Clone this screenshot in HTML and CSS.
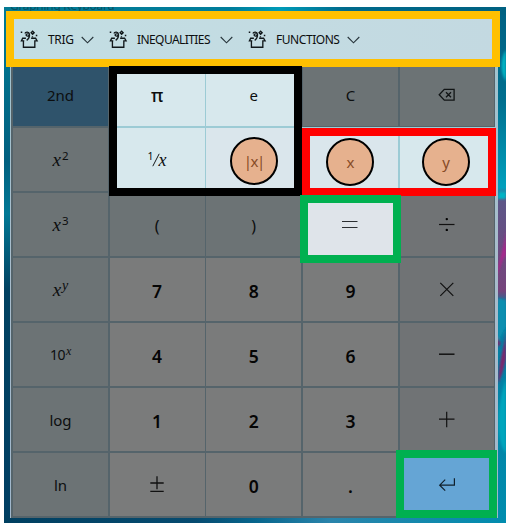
FILE: index.html
```html
<!DOCTYPE html>
<html lang="en">
<head>
<meta charset="utf-8">
<title>Graphing Keyboard</title>
<link rel="stylesheet" href="styles.css">
</head>
<body>
<svg class="defs" width="0" height="0">
  <symbol id="gift" viewBox="0 0 20 20">
    <g fill="none" stroke="#10171a" stroke-width="1.4">
      <path d="M6.2 9.2H2.8L1.5 12h3M3.6 11.5v7.2h12v-7.2M11.7 9.2h4.7l1.6 2.8h-3"/>
      <path d="M5.2 4.2C5.8 2.2 9.6 2.1 9.9 4.8c.2 2.8-3.7 2.7-3.4.7.3-1.3 1.7-1.1 2-.4M9.9 4.5c.4 3-.3 5.1-2.9 6.9"/>
      <path d="M13.3 1.8l1.6 1.6-1.6 1.6-1.6-1.6z"/>
    </g>
    <path fill="#10171a" d="M.8 2h1.6v1.6H.8zM16.6 5.5h1.6v1.6h-1.6zM12.4 7h1.4v1.4h-1.4z"/>
  </symbol>
  <symbol id="chevron" viewBox="0 0 13 8"><path d="M.7 1l5.8 5.8L12.3 1" fill="none" stroke="#27343a" stroke-width="1.1"/></symbol>
</svg>
<main class="desktop">
  <svg class="wallpaper" viewBox="0 0 502 516" preserveAspectRatio="none">
    <defs>
      <linearGradient id="left" x2="0" y2="1"><stop offset="0" stop-color="#007c96"/><stop offset=".3" stop-color="#005f7f"/><stop offset=".4" stop-color="#007895"/><stop offset=".55" stop-color="#004060"/><stop offset="1" stop-color="#003f63"/></linearGradient>
      <linearGradient id="top"><stop offset="0" stop-color="#047a94"/><stop offset=".45" stop-color="#007d9b"/><stop offset=".55" stop-color="#009bb8"/><stop offset=".68" stop-color="#006a8c"/><stop offset="1" stop-color="#006181"/></linearGradient>
      <linearGradient id="bottom"><stop offset="0" stop-color="#003f60"/><stop offset=".38" stop-color="#064b70"/><stop offset=".5" stop-color="#07658c"/><stop offset=".65" stop-color="#2a84ab"/><stop offset="1" stop-color="#008cae"/></linearGradient>
      <linearGradient id="right" x2="0" y2="1"><stop offset="0" stop-color="#006183"/><stop offset=".18" stop-color="#006f8f"/><stop offset=".35" stop-color="#00a0bd"/><stop offset=".37" stop-color="#5c5788"/><stop offset=".55" stop-color="#76447c"/><stop offset=".58" stop-color="#057ba0"/><stop offset="1" stop-color="#008dae"/></linearGradient>
      <filter id="soft"><feGaussianBlur stdDeviation="1"/></filter>
    </defs>
    <path fill="url(#left)" d="M0 0h250v516H0z"/>
    <path fill="url(#right)" d="M250 0h252v516H250z"/>
    <path fill="url(#top)" d="M0 0h502v8H0z"/>
    <path fill="url(#bottom)" d="M0 508h502v8H0z"/>
    <g filter="url(#soft)">
      <path fill="#00b4c4" d="M502 43c-6 8-6 24 0 31zM495 185h7v7h-9z"/>
      <path fill="#a8288c" d="M502 223c-2 20-9 36-9 45 5-10 5-17 9-19z"/>
      <path fill="#078fb0" d="M494 291l8 2v27l-8 15z"/>
      <path fill="#7c286e" d="M502 324c-1 17-7 25-8 53 6-13 7-23 8-25zM493 330l4 7-4 3z"/>
      <path fill="#00a6bd" d="M502 372c-9 25-11 62 0 74z"/>
    </g>
  </svg>
  <div class="title">Graphing Keyboard</div>
  <section class="panel">
    <nav class="toolbar">
      <div class="menu trig"><svg class="gift"><use href="#gift"/></svg><span>TRIG</span><svg class="chev"><use href="#chevron"/></svg></div>
      <div class="menu ineq"><svg class="gift"><use href="#gift"/></svg><span>INEQUALITIES</span><svg class="chev"><use href="#chevron"/></svg></div>
      <div class="menu func"><svg class="gift"><use href="#gift"/></svg><span>FUNCTIONS</span><svg class="chev"><use href="#chevron"/></svg></div>
    </nav>
    <div class="keys">
      <div class="key second">2nd</div>
      <div class="key lit pi">π</div>
      <div class="key lit">e</div>
      <div class="key">C</div>
      <div class="key"><svg width="18" height="14" viewBox="0 0 18 14"><path d="M6.3 1.4h9.8v10.8H6.3L1.2 6.8zM8 4.3l5 5M13 4.3l-5 5" fill="none" stroke="#101415" stroke-width="1.3"/></svg></div>

      <div class="key"><span class="math">x</span><sup>2</sup></div>
      <div class="key lit frac"><sup>1</sup><svg class="slash" width="8" height="14" viewBox="0 0 8 14"><path d="M7.2 .8L.8 13.2" stroke="#15191b" stroke-width="1"/></svg><span class="math">x</span></div>
      <div class="key lit pale"><span class="var abs">|x|</span></div>
      <div class="key lit pale"><span class="var low">x</span></div>
      <div class="key lit"><span class="var mid">y</span></div>

      <div class="key"><span class="math">x</span><sup>3</sup></div>
      <div class="key paren">(</div>
      <div class="key paren">)</div>
      <div class="key equal"><svg width="18" height="12" viewBox="0 0 18 12"><path d="M1 2.5h15.5M1 8.5h15.5" stroke="#2c2f32" stroke-width="1.2"/></svg></div>
      <div class="key op"><svg width="18" height="18" viewBox="0 0 18 18"><path d="M1 8.5h15.5" stroke="#111" stroke-width="1.2"/><circle cx="8.8" cy="3.1" r="1.2"/><circle cx="8.8" cy="13.9" r="1.2"/></svg></div>

      <div class="key"><span class="math">x</span><sup class="math">y</sup></div>
      <div class="key num">7</div><div class="key num">8</div><div class="key num">9</div>
      <div class="key op"><svg width="18" height="18" viewBox="0 0 18 18"><path d="M2.3 1.8l13 13M15.3 1.8l-13 13" stroke="#111" stroke-width="1.2"/></svg></div>

      <div class="key ten"><span>10</span><sup class="math">x</sup></div>
      <div class="key num">4</div><div class="key num">5</div><div class="key num">6</div>
      <div class="key op"><svg width="18" height="18" viewBox="0 0 18 18"><path d="M1 8.2h15.5" stroke="#111" stroke-width="1.5"/></svg></div>

      <div class="key word">log</div>
      <div class="key num">1</div><div class="key num">2</div><div class="key num">3</div>
      <div class="key op"><svg width="18" height="18" viewBox="0 0 18 18"><path d="M1 8.2h15.5M8.7 .7v15.5" stroke="#111" stroke-width="1.2"/></svg></div>

      <div class="key word">ln</div>
      <div class="key num pm"><svg width="16" height="18" viewBox="0 0 16 18"><path d="M1.3 8h13.4M8 1.2v13M1.3 16.3h13.4" stroke="#111" stroke-width="1.3"/></svg></div>
      <div class="key num">0</div><div class="key num">.</div>
      <div class="key enter"><svg width="18" height="16" viewBox="0 0 18 16"><path d="M16.4 1.2v7H1.8M7.2 2.7L1.7 8.2l5.5 5.5" fill="none" stroke="#10202c" stroke-width="1.2"/></svg></div>
    </div>
  </section>
  <div class="mark toolbar-mark"></div>
  <div class="mark constants-mark"></div>
  <div class="mark variables-mark"></div>
  <div class="mark equal-mark"></div>
  <div class="mark enter-mark"></div>
</main>
</body>
</html>
```
FILE: styles.css
```css
* { box-sizing: border-box; }
body {
  margin: 0;
  background: #fff;
  font-family: "Noto Sans", "Open Sans", sans-serif;
  color: #0c0e0f;
}
.defs { position: absolute; }
.desktop {
  position: relative;
  width: 502px;
  height: 516px;
  margin: 7px 0 0 4px;
  overflow: hidden;
}
.wallpaper { position: absolute; width: 100%; height: 100%; }
.title {
  position: absolute;
  top: -8px;
  left: 6px;
  font-size: 12px;
  line-height: 14px;
  letter-spacing: -.3px;
  color: #075265;
}
.panel {
  position: relative;
  width: 488px;
  height: 507px;
  margin: 4px 0 0 6px;
  padding-left: 3px;
  background: linear-gradient(#9fc5d0, #a8bccb 50%, #a0b7cb);
  overflow: hidden;
}
.panel::before {
  content: "";
  position: absolute;
  inset: 48px 3px 0 1px;
  background: #55646b;
}
.toolbar {
  position: relative;
  z-index: 1;
  display: flex;
  width: 488px;
  height: 56px;
  margin-left: -3px;
  padding: 8px 0 8px 10px;
  background: linear-gradient(90deg, #c3dee3, #c3d9e1);
  font-size: 12px;
}
.menu { display: flex; align-items: center; height: 40px; }
.menu span { display: block; margin-left: 9px; white-space: nowrap; line-height: 20px; transform: translateY(.5px); }
.menu.trig { width: 89px; }
.menu.ineq { width: 139px; }
.trig span { width: 33px; letter-spacing: -.3px; }
.ineq span { width: 83px; letter-spacing: -.58px; }
.func span { width: 71px; letter-spacing: -.45px; }
.gift { width: 19px; height: 20px; flex: none; margin-top: -1px; }
.chev { width: 13px; height: 8px; flex: none; margin-top: 1px; }
.keys {
  position: relative;
  display: grid;
  grid-template-columns: repeat(5, 1fr);
  grid-template-rows: repeat(7, 63px);
  gap: 2px 1.7px;
  width: 481.5px;
  margin-top: -4px;
}
.key {
  display: flex;
  align-items: center;
  justify-content: center;
  background: #6c7375;
  font-size: 15px;
  line-height: 20px;
  padding-top: 1px;
}
.key.second { background: #2f536b; }
.key.lit { background: #d7e8ed; box-shadow: 0 0 0 1px #9ccbd5; }
.key.pale { background: #dae6ec; }
.key.pi { font-size: 18px; font-weight: 500; padding: 0; }
.key.equal { background: #dfe4ea; padding-top: 0; }
.key.enter { background: #65a5d5; padding: 0; }
.key.op { background: #707375; padding: 0; }
.key.num { background: #7a7b7b; font-size: 17.5px; font-weight: 600; color: #050505; padding-top: 2px; }
.key.pm { padding: 0 0 2px; }
.key.paren { font-size: 16px; padding-top: 2px; }
.math { font-family: "Liberation Serif", serif; font-style: italic; font-size: 19px; }
.key sup { font-size: 11.5px; line-height: 14px; margin: -9px 0 0 1px; }
.key sup.math { font-size: 14px; }
.key.ten { font-size: 14px; letter-spacing: -.5px; }
.key.ten sup.math { font-size: 12px; }
.key.frac sup { font-size: 10.5px; margin: -8px 0 0; }
.frac .math { font-size: 18px; }
.frac .slash { flex: none; margin: 0 -1px 0 -2px; }
.var {
  display: flex;
  align-items: center;
  justify-content: center;
  width: 48px;
  height: 48px;
  margin-top: 1px;
  border: 2px solid #000;
  border-radius: 50%;
  background: #e6b18e;
  color: #874b27;
}
.var.abs { letter-spacing: -1.5px; }
.var.low { margin-top: 4px; }
.var.mid { margin-top: 3px; margin-left: -2px; }
.mark { position: absolute; z-index: 2; border: 8px solid; }
.toolbar-mark { left: 2px; top: 4px; width: 494px; height: 56px; border-color: #ffc000; }
.constants-mark { left: 105px; top: 59px; width: 193px; height: 130px; border-color: #000; }
.variables-mark { left: 298px; top: 121px; width: 194px; height: 68px; border-color: #f00; }
.equal-mark { left: 296px; top: 188px; width: 101px; height: 68px; border-color: #00b050; }
.enter-mark { left: 392px; top: 443px; width: 101px; height: 68px; border-color: #00b050; }
```
